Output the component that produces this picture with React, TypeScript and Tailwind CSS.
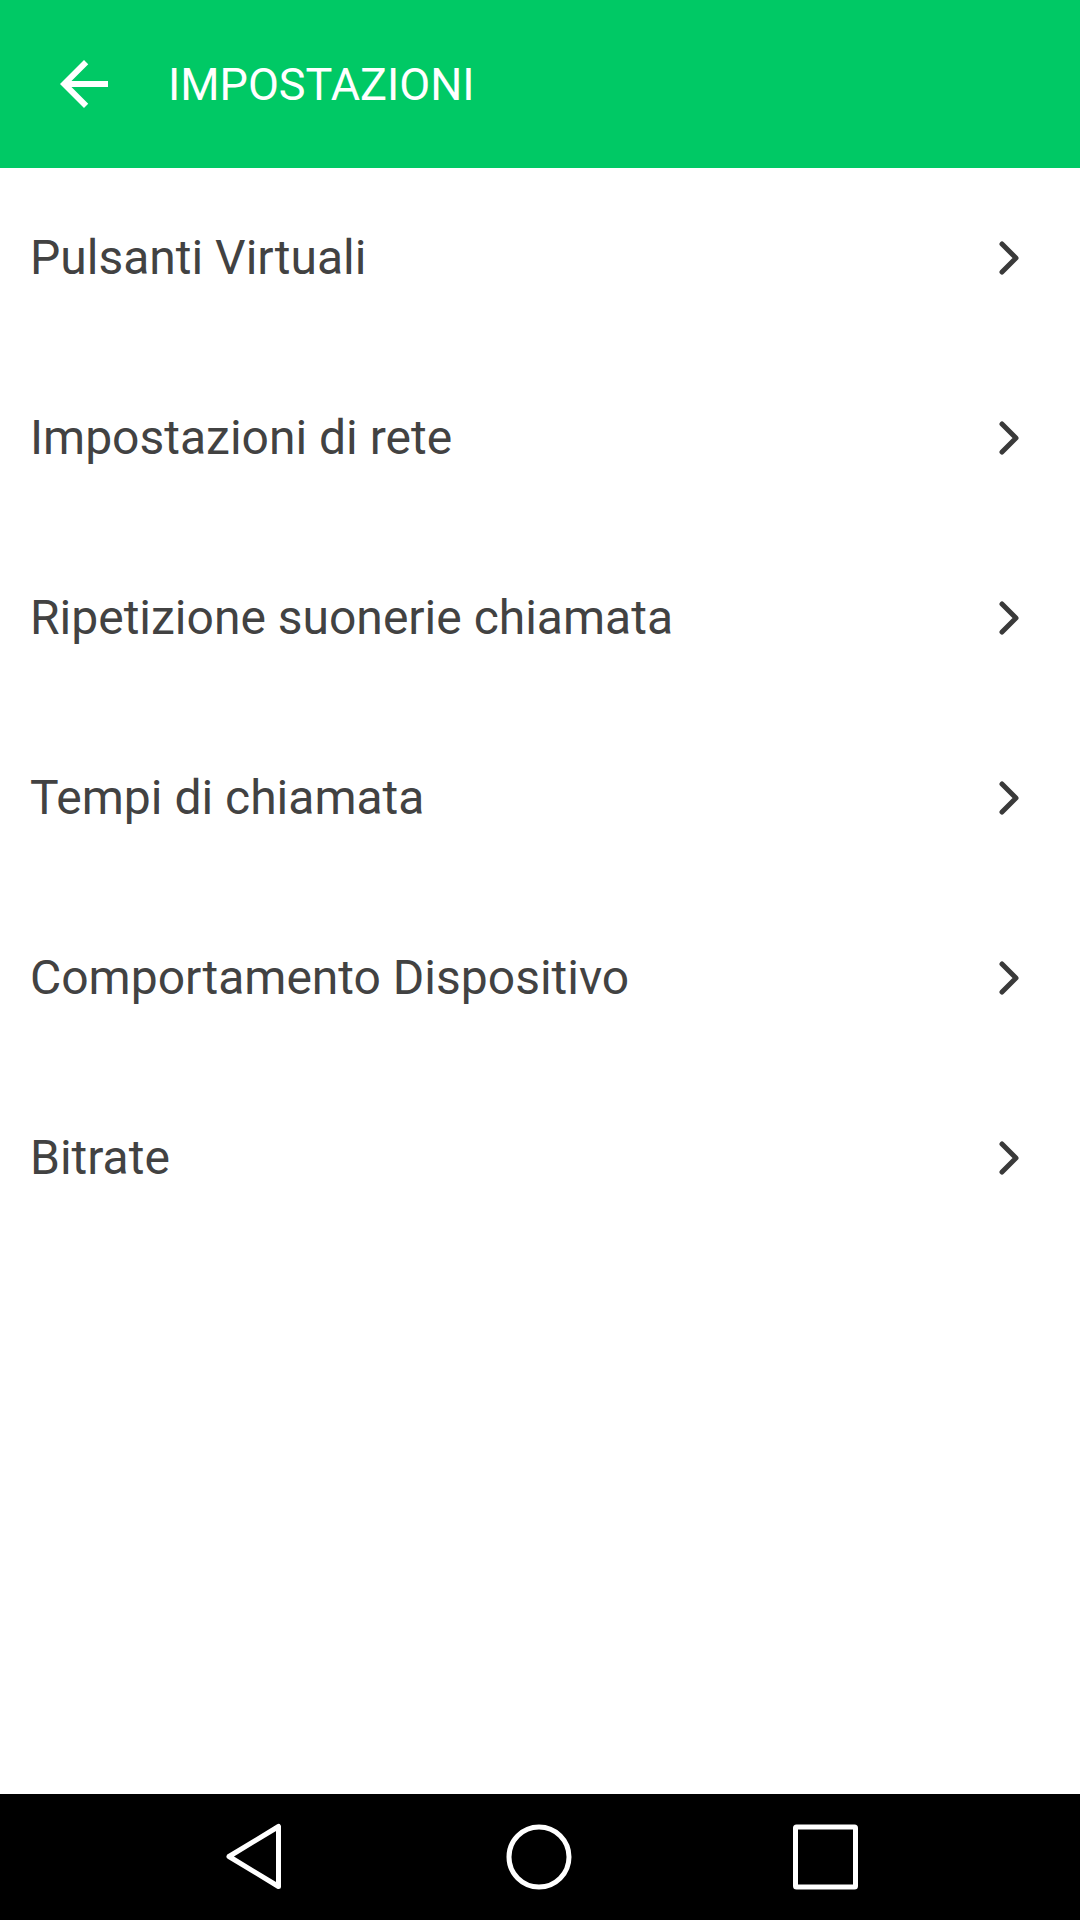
import React from "react";

const items = [
  "Pulsanti Virtuali",
  "Impostazioni di rete",
  "Ripetizione suonerie chiamata",
  "Tempi di chiamata",
  "Comportamento Dispositivo",
  "Bitrate",
];

const BackArrow = () => (
  <svg width="72" height="72" viewBox="0 0 24 24" fill="#ffffff">
    <path d="M20 11H7.83l5.59-5.59L12 4l-8 8 8 8 1.41-1.41L7.83 13H20v-2z" />
  </svg>
);

// thin stroked chevron, 19x33 like the device one
const Chevron = () => (
  <svg width="30" height="44" viewBox="0 0 30 44" fill="none" stroke="#3a3a3a" strokeWidth="5" strokeLinecap="round" strokeLinejoin="round">
    <path d="M7 8 L21 22 L7 36" />
  </svg>
);

export default function App() {
  return (
    <div
      className="w-[1080px] h-[1920px] flex flex-col bg-white"
      style={{ fontFamily: "Roboto, 'Noto Sans', sans-serif" }}
    >
      <header className="h-[168px] bg-[#00c965] flex items-center shrink-0">
        <div className="w-[72px] ml-[48px] flex items-center">
          <BackArrow />
        </div>
        <h1 className="ml-[48px] text-white text-[45px] leading-none font-normal">IMPOSTAZIONI</h1>
      </header>

      <ul className="flex-1 flex flex-col">
        {items.map((label) => (
          <li key={label} className="h-[180px] flex items-center justify-between pl-[30px] pr-[55px]">
            <span className="text-[48px] text-[#424242] leading-none">{label}</span>
            <Chevron />
          </li>
        ))}
      </ul>

      <nav className="h-[126px] bg-black flex items-center shrink-0 pl-[218px] gap-[216px]">
        <svg width="70" height="70" viewBox="0 0 70 70" fill="none" stroke="#ffffff" strokeWidth="5" strokeLinejoin="round">
          <path d="M60.5 4.5 L60.5 64.5 L11 34.5 Z" />
        </svg>
        <svg width="70" height="70" viewBox="0 0 70 70" fill="none" stroke="#ffffff" strokeWidth="5">
          <circle cx="35" cy="35" r="30" />
        </svg>
        <svg width="70" height="70" viewBox="0 0 70 70" fill="none" stroke="#ffffff" strokeWidth="5">
          <rect x="5.5" y="5" width="60" height="60" rx="1" />
        </svg>
      </nav>
    </div>
  );
}
